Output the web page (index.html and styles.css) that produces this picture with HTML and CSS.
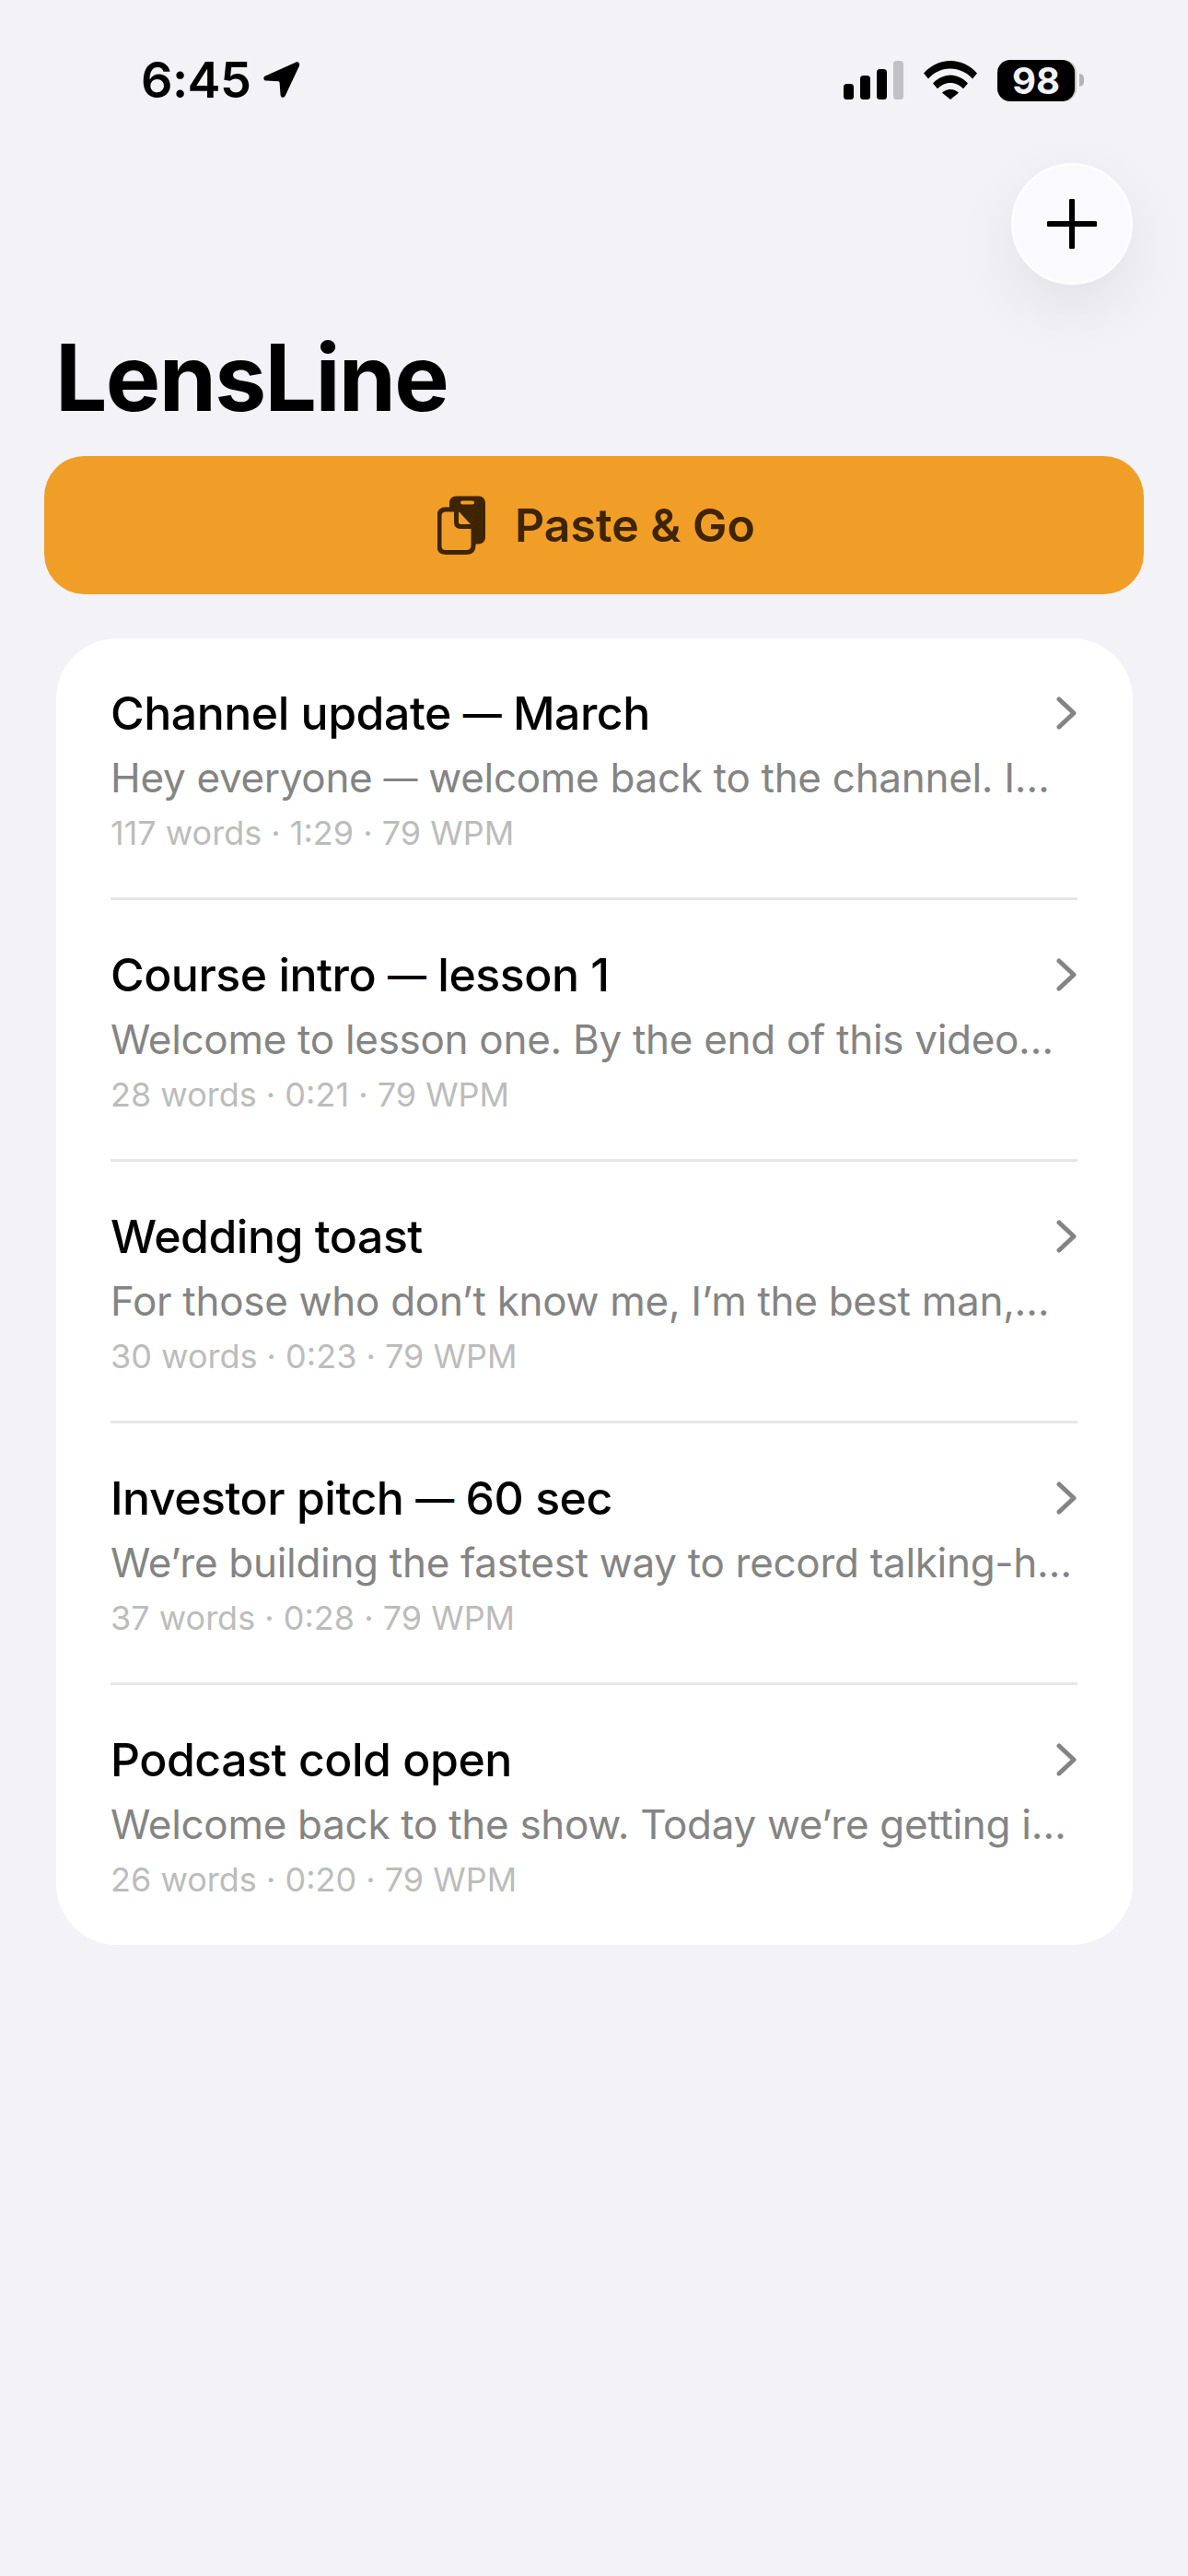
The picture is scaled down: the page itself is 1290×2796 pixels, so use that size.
FILE: index.html
```html
<!DOCTYPE html>
<html lang="en">
<head>
<meta charset="utf-8">
<title>LensLine</title>
<link rel="stylesheet" href="styles.css">
</head>
<body>
<div class="screen">
  <header class="status">
    <div class="status-left">
      <span class="clock">6:45</span>
      <svg class="loc" width="42" height="42" viewBox="0 0 42 42"><path d="M37.5 1.500 4 16.400c-2.600 1.200-2 5 1 5.200l13 .7c.9 0 1.500.7 1.600 1.600l1 13.300c.2 2.900 4 3.500 5.100.9L41 5.400c.9-2.500-1.300-4.800-3.500-3.900Z" fill="#000"/></svg>
    </div>
    <div class="status-right">
      <svg class="signal" width="66" height="42" viewBox="0 0 66 42">
        <rect x="0" y="25" width="11" height="17" rx="3.500" fill="#000"/>
        <rect x="18" y="16" width="11" height="26" rx="3.500" fill="#000"/>
        <rect x="36" y="9" width="11" height="33" rx="3.500" fill="#000"/>
        <rect x="54" y="0" width="11" height="42" rx="3.500" fill="#c0c0c5"/>
      </svg>
      <svg class="wifi" width="58" height="42" viewBox="0 0 58 42">
        <path d="M0 13.500C7.500 5 18 0 29 0s21.500 5 29 13.500l-5 6C47 12.500 38 8.500 29 8.500S11 12.500 5 19.500Z" fill="#000"/>
        <path d="M10 24.500C15 19 22 15.500 29 15.500s14 3.500 19 9l-5 5.800C39.500 26.500 34.500 24 29 24s-10.500 2.500-14 6.300Z" fill="#000"/>
        <path d="M20 34.800c2.300-2.400 5.600-3.800 9-3.800s6.700 1.400 9 3.800L29 42Z" fill="#000"/>
      </svg>
      <div class="battery">
        <span class="battery-body">98</span>
        <span class="battery-cap"></span>
      </div>
    </div>
  </header>

  <div class="toolbar">
    <button class="add-btn" type="button" aria-label="New script">
      <svg width="54" height="54" viewBox="0 0 54 54"><path d="M27 2v50M2 27h50" stroke="#000" stroke-width="6" stroke-linecap="round"/></svg>
    </button>
  </div>

  <h1 class="title">LensLine</h1>

  <button class="paste-btn" type="button">
    <svg class="paste-icon" width="54" height="64" viewBox="0 0 54 64">
      <path d="M13 8c0-4.500 3-7.500 7.500-7.500h24C49 .5 52 3.500 52 8v37c0 4.500-3 7.500-7.500 7.500H39V27L24 13H13Z" fill="#3f2400"/>
      <rect x="25" y="5.500" width="15" height="4" rx="2" fill="#f09e27"/>
      <path d="M9 15h14c1 0 2 .5 3 1.500l12 13c.8 .9 1 1.500 1 2.500v22c0 5-2.500 7.500-7.500 7.500H9C4.500 61.500 2 59 2 54.500V22C2 17.500 4.500 15 9 15Z" fill="#f09e27" stroke="#3f2400" stroke-width="5" stroke-linejoin="round"/>
      <path d="M20.500 15.500V29c0 3 1.500 4.500 4.500 4.500h13" fill="none" stroke="#3f2400" stroke-width="5"/>
    </svg>
    <span>Paste &amp; Go</span>
  </button>

  <ul class="list">
    <li class="row">
      <div class="row-top"><span class="row-title">Channel update <span class="dash">—</span> March</span>
        <svg class="chev" width="24" height="36" viewBox="0 0 24 36"><path d="M4 3l16 15L4 33" fill="none" stroke="#848484" stroke-width="5" stroke-linecap="round" stroke-linejoin="round"/></svg></div>
      <p class="row-preview">Hey everyone <span class="dash">—</span> welcome back to the channel. I…</p>
      <p class="row-meta">117 words · 1:29 · 79 WPM</p>
    </li>
    <li class="row">
      <div class="row-top"><span class="row-title">Course intro <span class="dash">—</span> lesson 1</span>
        <svg class="chev" width="24" height="36" viewBox="0 0 24 36"><path d="M4 3l16 15L4 33" fill="none" stroke="#848484" stroke-width="5" stroke-linecap="round" stroke-linejoin="round"/></svg></div>
      <p class="row-preview">Welcome to lesson one. By the end of this video…</p>
      <p class="row-meta">28 words · 0:21 · 79 WPM</p>
    </li>
    <li class="row">
      <div class="row-top"><span class="row-title">Wedding toast</span>
        <svg class="chev" width="24" height="36" viewBox="0 0 24 36"><path d="M4 3l16 15L4 33" fill="none" stroke="#848484" stroke-width="5" stroke-linecap="round" stroke-linejoin="round"/></svg></div>
      <p class="row-preview">For those who don’t know me, I’m the best man,…</p>
      <p class="row-meta">30 words · 0:23 · 79 WPM</p>
    </li>
    <li class="row">
      <div class="row-top"><span class="row-title">Investor pitch <span class="dash">—</span> 60 sec</span>
        <svg class="chev" width="24" height="36" viewBox="0 0 24 36"><path d="M4 3l16 15L4 33" fill="none" stroke="#848484" stroke-width="5" stroke-linecap="round" stroke-linejoin="round"/></svg></div>
      <p class="row-preview">We’re building the fastest way to record talking-h…</p>
      <p class="row-meta">37 words · 0:28 · 79 WPM</p>
    </li>
    <li class="row">
      <div class="row-top"><span class="row-title">Podcast cold open</span>
        <svg class="chev" width="24" height="36" viewBox="0 0 24 36"><path d="M4 3l16 15L4 33" fill="none" stroke="#848484" stroke-width="5" stroke-linecap="round" stroke-linejoin="round"/></svg></div>
      <p class="row-preview">Welcome back to the show. Today we’re getting i…</p>
      <p class="row-meta">26 words · 0:20 · 79 WPM</p>
    </li>
  </ul>
</div>
</body>
</html>
```
FILE: styles.css
```css
* { box-sizing: border-box; }

html, body {
  margin: 0;
  padding: 0;
  background: #f2f2f7;
}

.screen {
  width: 1290px;
  height: 2796px;
  overflow: hidden;
  font-family: Inter, "Liberation Sans", sans-serif;
  color: #000;
}

/* Status bar */
.status {
  height: 147px;
  padding: 57px 113px 0 153px;
  display: flex;
  justify-content: space-between;
  align-items: flex-start;
}

.status-left {
  display: flex;
  align-items: center;
  gap: 12px;
  height: 60px;
}

.clock {
  font-size: 54px;
  font-weight: 600;
  line-height: 60px;
  letter-spacing: -0.6px;
}

.status-right {
  display: flex;
  align-items: center;
  gap: 22px;
  height: 60px;
}

.signal {
  margin-right: -1px;
}

.battery {
  display: flex;
  align-items: center;
  gap: 5px;
}

.battery-body {
  width: 84px;
  height: 45px;
  border-radius: 14px;
  background: #000;
  box-shadow: 2px 0 0 #c4c4c8;
  color: #f2f2f7;
  font-size: 40px;
  font-weight: 700;
  line-height: 45px;
  text-align: center;
}

.battery-cap {
  width: 5px;
  height: 14px;
  border-radius: 0 6px 6px 0;
  background: #b4b4b8;
}

/* Add button row */
.toolbar {
  height: 132px;
  padding-right: 60px;
  display: flex;
  justify-content: flex-end;
  margin-top: 30px;
}

.add-btn {
  width: 132px;
  height: 132px;
  padding: 0;
  border: 3px solid #fdfdff;
  border-radius: 50%;
  background: #fafafe;
  box-shadow: 0 24px 70px rgba(0, 0, 0, 0.08);
  display: flex;
  align-items: center;
  justify-content: center;
}

.title {
  margin: 41px 0 0 60px;
  font-size: 100px;
  font-weight: 700;
  line-height: 120px;
  letter-spacing: -1.7px;
}

.paste-btn {
  width: 1194px;
  height: 150px;
  margin: 25px 0 0 48px;
  padding: 0 0 0 5px;
  border: 0;
  border-radius: 44px;
  background: #f09e27;
  color: #3f2400;
  font-family: inherit;
  font-size: 50px;
  font-weight: 560;
  display: flex;
  align-items: center;
  justify-content: center;
  gap: 30px;
}

/* Script list */
.list {
  list-style: none;
  width: 1169px;
  margin: 48px 0 0 61px;
  padding: 0 60px 0 59px;
  background: #fff;
  border-radius: 66px;
}

.row {
  height: 284px;
  padding-top: 50px;
  border-bottom: 3px solid #e6e6e8;
}

.row:last-child {
  height: 282px;
  border-bottom: 0;
}

.row-top {
  display: flex;
  justify-content: space-between;
  align-items: center;
  height: 62px;
}

.row-title {
  font-size: 50px;
  line-height: 62px;
  font-weight: 500;
  letter-spacing: -0.5px;
}

/* Shorter em dash, drawn a little smaller than the surrounding text */
.dash {
  font-size: 0.84em;
  line-height: 0;
  vertical-align: 0.05em;
}

.row-preview {
  margin: 12px 0 0;
  font-size: 44px;
  line-height: 54px;
  letter-spacing: -0.3px;
  color: #848484;
  white-space: nowrap;
}

.row-meta {
  margin: 11px 0 0;
  font-size: 36px;
  line-height: 44px;
  color: #bcbcbc;
  white-space: nowrap;
}
```
